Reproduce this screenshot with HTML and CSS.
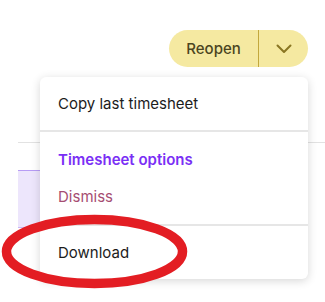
FILE: index.html
```html
<!DOCTYPE html>
<html lang="en">
<head>
    <meta charset="UTF-8">
    <title>Timesheet actions</title>
    <link rel="stylesheet" href="styles.css">
</head>
<body>
    <div class="page">
        <div class="toolbar">
            <div class="split-btn">
                <button class="split-main">Reopen</button>
                <button class="split-toggle" aria-label="More actions">
                    <svg width="16" height="10" viewBox="0 0 16 10"><path d="M1.5 1.5 L8 8 L14.5 1.5" fill="none" stroke="#8a7622" stroke-width="2" stroke-linecap="round" stroke-linejoin="round"/></svg>
                </button>
            </div>
        </div>

        <div class="content">
            <div class="panel"></div>
        </div>

        <div class="menu">
            <div class="menu-section">
                <div class="menu-item">Copy last timesheet</div>
            </div>
            <div class="menu-section">
                <div class="menu-item options">Timesheet options</div>
                <div class="menu-item dismiss">Dismiss</div>
            </div>
            <div class="menu-section">
                <div class="menu-item">Download</div>
            </div>
        </div>

        <!-- highlight marker drawn on top of the screenshot -->
        <svg class="marker" width="325" height="302" viewBox="0 0 325 302">
            <ellipse cx="94.5" cy="251.5" rx="88" ry="32" fill="none" stroke="#e31d23" stroke-width="9.5"/>
        </svg>
    </div>
</body>
</html>
```

FILE: styles.css
```css
body {
    margin: 0;
    background: #fff;
    font-family: Inter, "Noto Sans", sans-serif;
    color: #1c1c1c;
}
.page {
    position: relative;
    width: 325px;
    height: 302px;
    overflow: hidden;
}
.toolbar {
    display: flex;
    justify-content: flex-end;
    padding: 30px 17px 0 0;
}
.split-btn {
    display: flex;
    height: 37px;
    background: #f5e9a1;
    border-radius: 19px;
    overflow: hidden;
}
.split-btn button {
    border: 0;
    background: none;
    font-family: inherit;
    padding: 0;
    cursor: pointer;
}
.split-main {
    width: 90px;
    font-size: 15px;
    font-weight: 500;
    color: #4b4521;
    border-right: 1px solid #c3a83c !important;
}
.split-toggle {
    width: 49px;
    display: flex;
    align-items: center;
    justify-content: center;
}
.content {
    margin: 75px 0 0 18px;
    border-top: 1px solid #e2e2e2;
}
.panel {
    margin-top: 27px;
    width: 200px;
    height: 56px;
    background: #ede6fc;
    border-top: 1px solid #b79cf5;
    border-bottom: 1px solid #c9b6f7;
}
.menu {
    position: absolute;
    top: 77px;
    left: 40px;
    width: 268px;
    background: #fff;
    border-radius: 6px;
    box-shadow: 0 2px 10px rgba(0, 0, 0, 0.16);
}
.menu-section {
    padding: 8px 0;
}
.menu-section + .menu-section {
    border-top: 2px solid #e6e6e6;
}
.menu-section:nth-child(2) {
    padding: 9px 0;
}
.menu-item {
    height: 37px;
    line-height: 37px;
    padding: 0 18px;
    font-size: 15px;
}
.menu-item.options {
    color: #7a2ff5;
    font-weight: 600;
}
.menu-item.dismiss {
    color: #a64d72;
}
.marker {
    position: absolute;
    top: 0;
    left: 0;
    pointer-events: none;
}
```
